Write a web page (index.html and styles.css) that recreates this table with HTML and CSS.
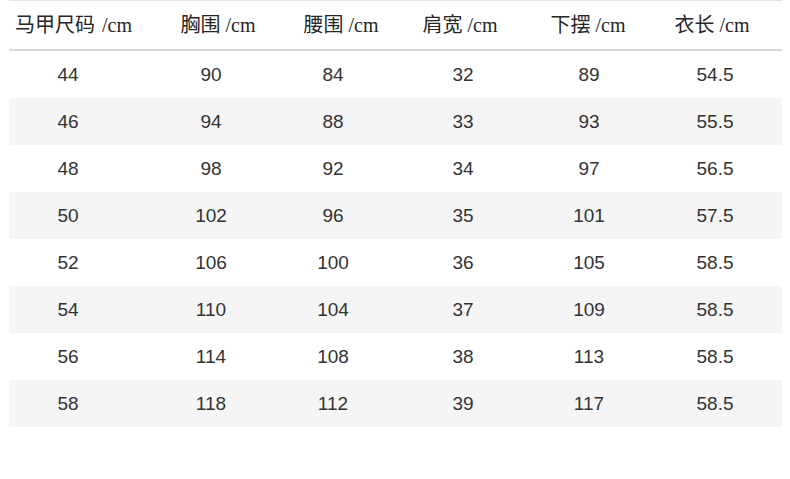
FILE: index.html
```html
<!DOCTYPE html>
<html lang="zh">
<head>
<meta charset="utf-8">
<link rel="stylesheet" href="styles.css">
</head>
<body>
<div class="size-table">
  <div class="row head">
    <div class="cell">马甲尺码 /cm</div>
    <div class="cell">胸围 /cm</div>
    <div class="cell">腰围 /cm</div>
    <div class="cell">肩宽 /cm</div>
    <div class="cell">下摆 /cm</div>
    <div class="cell">衣长 /cm</div>
  </div>
  <div class="row"><div class="cell">44</div><div class="cell">90</div><div class="cell">84</div><div class="cell">32</div><div class="cell">89</div><div class="cell">54.5</div></div>
  <div class="row alt"><div class="cell">46</div><div class="cell">94</div><div class="cell">88</div><div class="cell">33</div><div class="cell">93</div><div class="cell">55.5</div></div>
  <div class="row"><div class="cell">48</div><div class="cell">98</div><div class="cell">92</div><div class="cell">34</div><div class="cell">97</div><div class="cell">56.5</div></div>
  <div class="row alt"><div class="cell">50</div><div class="cell">102</div><div class="cell">96</div><div class="cell">35</div><div class="cell">101</div><div class="cell">57.5</div></div>
  <div class="row"><div class="cell">52</div><div class="cell">106</div><div class="cell">100</div><div class="cell">36</div><div class="cell">105</div><div class="cell">58.5</div></div>
  <div class="row alt"><div class="cell">54</div><div class="cell">110</div><div class="cell">104</div><div class="cell">37</div><div class="cell">109</div><div class="cell">58.5</div></div>
  <div class="row"><div class="cell">56</div><div class="cell">114</div><div class="cell">108</div><div class="cell">38</div><div class="cell">113</div><div class="cell">58.5</div></div>
  <div class="row alt"><div class="cell">58</div><div class="cell">118</div><div class="cell">112</div><div class="cell">39</div><div class="cell">117</div><div class="cell">58.5</div></div>
</div>
</body>
</html>
```
FILE: styles.css
```css
html, body {
  margin: 0;
  padding: 0;
  background: #ffffff;
}
body {
  width: 790px;
  height: 479px;
  overflow: hidden;
}
.size-table {
  margin-left: 9px;
  width: 773px;
  display: flex;
  flex-direction: column;
}
.row {
  display: grid;
  grid-template-columns: 133px 134px 123px 126px 126px 131px;
  height: 47px;
  align-items: center;
  font-family: "Liberation Sans", Arial, sans-serif;
  font-size: 19px;
  color: #333333;
}
.row.alt {
  background: #f5f5f5;
}
.cell {
  text-align: center;
  white-space: nowrap;
}

/* data column nudges */
.row .cell:nth-child(1) { padding-right: 15px; }
.row .cell:nth-child(2) { padding-left: 4px; }
.row .cell:nth-child(3) { padding-right: 9px; }
.row .cell:nth-child(4) { padding-left: 2px; }
.row .cell:nth-child(5) { padding-left: 2px; }
.row .cell:nth-child(6) { padding-right: 3px; }

.row.head {
  height: 48px;
  border-top: 1px solid #e2e2e2;
  border-bottom: 2px solid #dadada;
  font-family: "Liberation Serif", "Noto Sans CJK SC", serif;
  font-size: 20px;
  color: #262626;
}
.row.head .cell { padding: 0 0 3px 0; }
.row.head .cell:nth-child(1) { text-align: left; padding-left: 6px; word-spacing: 2px; }
.row.head .cell:nth-child(2) { padding-left: 18px; }
.row.head .cell:nth-child(3) { padding-left: 7px; }
.row.head .cell:nth-child(4) { padding-right: 4px; }
.row.head .cell:nth-child(6) { padding-right: 9px; }
```
